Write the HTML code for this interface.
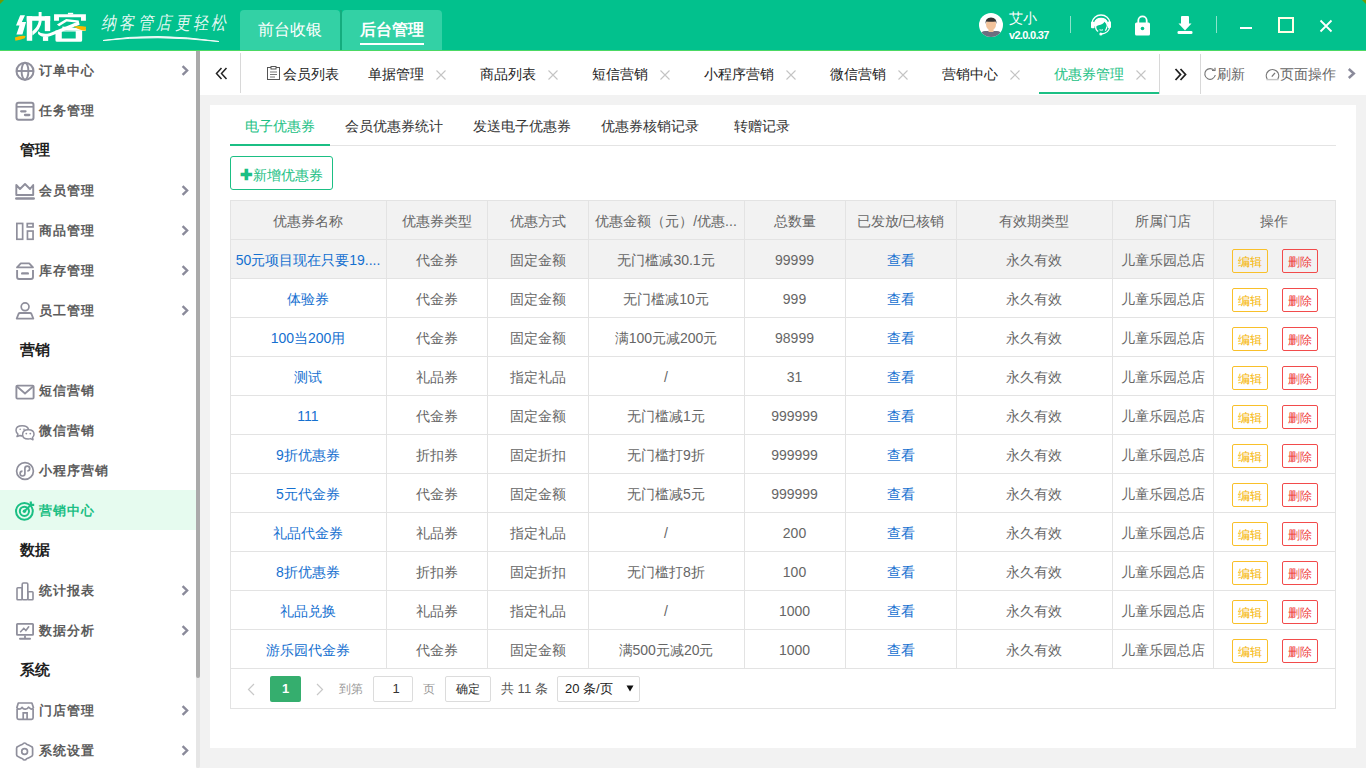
<!DOCTYPE html>
<html><head><meta charset="utf-8"><style>
*{box-sizing:border-box}
html,body{margin:0;padding:0}
body{width:1366px;height:768px;overflow:hidden;position:relative;font-family:"Liberation Sans",sans-serif;background:#f2f2f2;color:#333}
.ab{position:absolute;white-space:nowrap}
.hdr{left:0;top:0;width:1366px;height:50px;background:#02C18D}
.htab{top:10px;width:100px;height:40px;background:#33D1A5;border-radius:4px 4px 0 0;color:#fff;font-size:16px;line-height:40px;text-align:center}
.side{left:0;top:51px;width:196px;height:717px;background:#fff}
.mi{left:39px;font-size:13px;line-height:20px;font-weight:bold;color:#5c5c5c;letter-spacing:1px}
.sec{left:20px;font-size:15px;line-height:20px;font-weight:bold;color:#1f1f1f;font-family:"Liberation Serif",serif}
.chev{left:181px;width:8px;height:11px}
.ico{left:15px;width:20px;height:20px}
.tabt{top:64px;font-size:14px;line-height:20px;color:#222}
.tx{top:70px;width:10px;height:10px}
.cell{font-size:14px;line-height:20px;color:#666;text-align:center}
.lnk{color:#1570d0}
.btn{width:36px;height:24px;border:1px solid;border-radius:2px;font-size:12px;line-height:24px;text-align:center}
</style></head><body>

<div class="ab hdr"></div>
<svg class="ab" style="left:0;top:0" width="5" height="5"><path d="M0 0 H4 L0 4 Z" fill="#6E9A05"/></svg>
<svg class="ab" style="left:1361px;top:0" width="5" height="5"><path d="M5 0 H1 L5 4 Z" fill="#6E9A05"/></svg>
<div class="ab" style="left:0;top:50px;width:1366px;height:1px;background:#4CD964"></div>
<svg class="ab" style="left:12px;top:8px" width="80" height="38" viewBox="0 0 1366 649"><g fill="#fff">
<path d="M140 125 H222 L168 238 H240 L178 452 H75 L128 300 H68 Z"/>
<path d="M252 140 H345 V560 H252 Z"/>
<path d="M252 140 H652 V218 H252 Z"/>
<path d="M455 68 H505 V230 Q490 370 350 470 L345 400 Q440 320 455 230 Z"/>
<path d="M560 140 H652 V395 H560 Z"/>
<path d="M528 488 H618 V562 H528 Z"/>
<path d="M445 395 Q520 465 640 430 L1140 228 L1155 285 L660 480 Q520 525 445 445 Z"/>
<path d="M718 105 H1262 V218 H1178 V158 H802 V218 H718 Z"/>
<path d="M955 82 H1045 V110 H955 Z"/>
<path d="M768 282 L925 190 L1140 212 L1140 250 L935 232 L805 310 Z"/>
<path d="M860 315 L1255 360 L1255 392 L860 382 Z"/>
<path d="M742 385 H1198 V552 Q1198 578 1170 578 H770 Q742 578 742 552 Z M850 402 V520 H1088 V402 Z" fill-rule="evenodd"/>
</g>
<path d="M50 505 Q140 465 232 478 L218 518 Q140 548 58 560 Z" fill="#F7B800"/>
<path d="M1050 318 Q1150 295 1265 322 L1258 390 Q1160 388 1050 318 Z" fill="#F7B800"/>
</svg>
<div class="ab" style="left:101px;top:11px;font-size:15px;line-height:20px;color:rgba(255,255,255,0.9);letter-spacing:3.4px;font-style:italic;transform:scaleY(1.2);transform-origin:0 0">纳客管店更轻松</div>
<svg class="ab" style="left:100px;top:32px" width="125" height="12" viewBox="0 0 125 12"><path d="M3 8.5 Q55 0 119 9.5 Q55 2.5 3 8.5 Z" stroke="#fff" stroke-width="1" fill="#fff" opacity="0.95"/></svg>
<div class="ab htab" style="left:240px">前台收银</div>
<div class="ab" style="left:340px;top:10px;width:2px;height:40px;background:#14AC7E"></div>
<div class="ab htab" style="left:342px;font-weight:bold">后台管理</div>
<div class="ab" style="left:360px;top:43px;width:64px;height:2px;background:#fff"></div>
<svg class="ab" style="left:979px;top:13px" width="24" height="24" viewBox="0 0 24 24">
<circle cx="12" cy="12" r="12" fill="#fff"/>
<clipPath id="cc"><circle cx="12" cy="12" r="12"/></clipPath>
<g clip-path="url(#cc)"><rect x="2" y="18" width="20" height="8" rx="4" fill="#6E6E80"/>
<rect x="9.5" y="14" width="5" height="5" fill="#F2C39B"/>
<ellipse cx="12" cy="11.5" rx="5" ry="5.5" fill="#F2C39B"/>
<path d="M6.5 11 Q6 4.5 12 4.5 Q18 4.5 17.5 11 L16.5 8.5 Q12 9 7.5 8.5 Z" fill="#333"/></g></svg>
<div class="ab" style="left:1009px;top:8px;font-size:14px;line-height:20px;color:#fff">艾小</div>
<div class="ab" style="left:1009px;top:28px;font-size:11px;line-height:14px;color:#fff;font-weight:bold;letter-spacing:-0.7px">v2.0.0.37</div>
<div class="ab" style="left:1070px;top:16px;width:1px;height:17px;background:rgba(255,255,255,0.55)"></div>
<svg class="ab" style="left:1086px;top:10px" width="30" height="30" viewBox="0 0 30 30">
<path d="M5.8 13 A9.3 9.3 0 0 1 24.2 13" stroke="#fff" stroke-width="1.4" fill="none"/>
<path d="M8.5 13.5 A6.7 6.7 0 0 1 21.5 13.5" stroke="#fff" stroke-width="1.1" fill="none"/>
<rect x="5" y="11.8" width="3.6" height="6.4" rx="1" fill="#fff"/>
<rect x="21.6" y="11.5" width="3.4" height="6.6" rx="1" fill="#fff"/>
<path d="M7.8 15.5 Q8 8.2 15 8.2 Q22 8.2 22.2 15.5 L21 17 Q20.5 13 18.5 11.8 Q17 14.8 12.5 15.2 Q10.2 15.6 9.8 17.5 Z" fill="#fff"/>
<path d="M9.6 16.5 Q9.8 20.5 12.2 21.3" stroke="#fff" stroke-width="1.3" fill="none"/>
<path d="M13.5 19.8 Q15.2 20.6 17 19.8" stroke="#fff" stroke-width="1" fill="none"/>
<path d="M19.3 20.6 Q20.6 19 20.9 16.5" stroke="#fff" stroke-width="1.3" fill="none"/>
<path d="M23.6 17.5 Q22.5 23.2 15.5 24" stroke="#fff" stroke-width="1.3" fill="none"/>
<circle cx="14.8" cy="24" r="1.5" fill="#fff"/></svg>
<svg class="ab" style="left:1134px;top:15px" width="17" height="21" viewBox="0 0 17 21">
<path d="M4.3 8 V5.5 A4.2 4.2 0 0 1 12.7 5.5 V8" stroke="#fff" stroke-width="1.8" fill="none"/>
<rect x="1" y="7.5" width="15" height="13" rx="1.5" fill="#fff"/>
<circle cx="8.5" cy="13.5" r="1.8" fill="#02C18D"/></svg>
<svg class="ab" style="left:1177px;top:15px" width="17" height="20" viewBox="0 0 17 20">
<rect x="4" y="1" width="8" height="8.5" rx="1" fill="#fff"/>
<path d="M1.5 8.5 H14.5 L8 15.5 Z" fill="#fff"/>
<rect x="0.5" y="16" width="15" height="3" rx="1.3" fill="#fff"/></svg>
<div class="ab" style="left:1216px;top:16px;width:1px;height:17px;background:rgba(255,255,255,0.55)"></div>
<div class="ab" style="left:1240px;top:27px;width:12px;height:2px;background:#fff"></div>
<div class="ab" style="left:1278px;top:17px;width:16px;height:16px;border:2px solid #FFFFE6"></div>
<svg class="ab" style="left:1319px;top:19px" width="14" height="14" viewBox="0 0 14 14"><path d="M1.5 1.5 L12.5 12.5 M12.5 1.5 L1.5 12.5" stroke="#fff" stroke-width="1.8"/></svg>
<div class="ab side"></div>
<div class="ab" style="left:196px;top:51px;width:4px;height:717px;background:#e6e6e6;border-radius:2px"></div>
<div class="ab" style="left:196px;top:51px;width:4px;height:627px;background:#aaaaaa;border-radius:0 0 2px 2px"></div>
<div class="ab" style="left:0;top:490px;width:196px;height:40px;background:#E6FBEF"></div>
<div class="ab mi" style="top:61px;color:#5c5c5c">订单中心</div>
<svg class="ab ico" style="top:61px" viewBox="0 0 20 20"><circle cx="10" cy="10.2" r="8.5" stroke="#8f8f9c" stroke-width="2" fill="none"/><ellipse cx="10" cy="10.2" rx="3.4" ry="8.5" stroke="#8f8f9c" stroke-width="1.9" fill="none"/><path d="M2 10 H18" stroke="#8f8f9c" stroke-width="1.9"/></svg>
<svg class="ab chev" style="top:65px" viewBox="0 0 8 11"><path d="M1.6 1.1 L6.1 5.5 L1.6 9.9" stroke="#8a8a9a" stroke-width="2.4" fill="none"/></svg>
<div class="ab mi" style="top:101px;color:#5c5c5c">任务管理</div>
<svg class="ab ico" style="top:101px" viewBox="0 0 20 20"><rect x="1.5" y="1.8" width="17" height="17" rx="2" stroke="#8f8f9c" stroke-width="2" fill="none"/><path d="M2 5.8 H18" stroke="#8f8f9c" stroke-width="1.7"/><path d="M6.2 10.3 H10.5 M10 14 H14.3" stroke="#8f8f9c" stroke-width="2.3" stroke-linecap="round"/></svg>
<div class="ab sec" style="top:140px">管理</div>
<div class="ab mi" style="top:181px;color:#5c5c5c">会员管理</div>
<svg class="ab ico" style="top:181px" viewBox="0 0 20 20"><path d="M1.3 14 V4 L5 8 L10 3 L15 8 L18.2 4 V14 Z" stroke="#8f8f9c" stroke-width="1.9" fill="none" stroke-linejoin="round"/><path d="M1.3 17.4 H18.7" stroke="#8f8f9c" stroke-width="2.5" stroke-linecap="round"/></svg>
<svg class="ab chev" style="top:185px" viewBox="0 0 8 11"><path d="M1.6 1.1 L6.1 5.5 L1.6 9.9" stroke="#8a8a9a" stroke-width="2.4" fill="none"/></svg>
<div class="ab mi" style="top:221px;color:#5c5c5c">商品管理</div>
<svg class="ab ico" style="top:221px" viewBox="0 0 20 20"><rect x="1.85" y="2.45" width="5.8" height="15.8" stroke="#8f8f9c" stroke-width="1.7" fill="none"/><rect x="12.25" y="2.55" width="5.8" height="3.4" stroke="#8f8f9c" stroke-width="1.7" fill="none"/><rect x="12.45" y="10.05" width="5.6" height="8.2" stroke="#8f8f9c" stroke-width="1.7" fill="none"/></svg>
<svg class="ab chev" style="top:225px" viewBox="0 0 8 11"><path d="M1.6 1.1 L6.1 5.5 L1.6 9.9" stroke="#8a8a9a" stroke-width="2.4" fill="none"/></svg>
<div class="ab mi" style="top:261px;color:#5c5c5c">库存管理</div>
<svg class="ab ico" style="top:261px" viewBox="0 0 20 20"><path d="M5.8 2.3 H14.2 L18 6.4 H2 Z" stroke="#8f8f9c" stroke-width="1.8" fill="none" stroke-linejoin="round"/><path d="M2.1 9 V16 Q2.1 18 4.1 18 H16 Q18 18 18 16 V9" stroke="#8f8f9c" stroke-width="1.9" fill="none"/><path d="M7.2 12.4 H12.8" stroke="#8f8f9c" stroke-width="2.4" stroke-linecap="round"/></svg>
<svg class="ab chev" style="top:265px" viewBox="0 0 8 11"><path d="M1.6 1.1 L6.1 5.5 L1.6 9.9" stroke="#8a8a9a" stroke-width="2.4" fill="none"/></svg>
<div class="ab mi" style="top:301px;color:#5c5c5c">员工管理</div>
<svg class="ab ico" style="top:301px" viewBox="0 0 20 20"><circle cx="10.1" cy="5.8" r="3.9" stroke="#8f8f9c" stroke-width="1.7" fill="none"/><path d="M5 12 H15 Q16 12 16.5 13 L18.3 17.6 H1.7 L3.5 13 Q4 12 5 12 Z" stroke="#8f8f9c" stroke-width="1.8" fill="none" stroke-linejoin="round"/></svg>
<svg class="ab chev" style="top:305px" viewBox="0 0 8 11"><path d="M1.6 1.1 L6.1 5.5 L1.6 9.9" stroke="#8a8a9a" stroke-width="2.4" fill="none"/></svg>
<div class="ab sec" style="top:340px">营销</div>
<div class="ab mi" style="top:381px;color:#5c5c5c">短信营销</div>
<svg class="ab ico" style="top:381px" viewBox="0 0 20 20"><rect x="1.4" y="4.6" width="17.2" height="13" rx="1" stroke="#8f8f9c" stroke-width="1.9" fill="none"/><path d="M2 5.5 L10 12.5 L18 5.5" stroke="#8f8f9c" stroke-width="1.8" fill="none"/></svg>
<div class="ab mi" style="top:421px;color:#5c5c5c">微信营销</div>
<svg class="ab ico" style="top:421px" viewBox="0 0 20 20"><path d="M7.5 15 Q6.2 15 5 14.5 L2 15.5 L3 13 Q1 11.5 1 9.3 Q1 4.8 7.3 4.8 Q12.5 4.8 13.5 8.3" stroke="#8f8f9c" stroke-width="1.5" fill="none" stroke-linejoin="round"/><path d="M13.3 8.8 Q19 8.8 19 13.3 Q19 15.3 17.5 16.5 L18 18.7 L15.5 17.6 Q14.4 18 13.3 18 Q7.6 18 7.6 13.4 Q7.6 8.8 13.3 8.8 Z" stroke="#8f8f9c" stroke-width="1.5" fill="#fff" stroke-linejoin="round"/><circle cx="11.3" cy="12.6" r="0.9" fill="#8f8f9c"/><circle cx="15.3" cy="12.6" r="0.9" fill="#8f8f9c"/><circle cx="5.2" cy="8.3" r="0.8" fill="#8f8f9c"/><circle cx="9" cy="8.3" r="0.8" fill="#8f8f9c"/></svg>
<div class="ab mi" style="top:461px;color:#5c5c5c">小程序营销</div>
<svg class="ab ico" style="top:461px" viewBox="0 0 20 20"><circle cx="10" cy="10" r="8.4" stroke="#8f8f9c" stroke-width="1.7" fill="none"/><path d="M7.5 10.2 A2.4 2.4 0 1 0 9.9 12.6 V7.6 A2.4 2.4 0 1 1 12.3 10" stroke="#8f8f9c" stroke-width="1.7" fill="none"/></svg>
<div class="ab mi" style="top:501px;color:#1BBF84">营销中心</div>
<svg class="ab ico" style="top:501px" viewBox="0 0 20 20"><circle cx="9.4" cy="10.3" r="8.4" stroke="#1BBF84" stroke-width="2" fill="none"/><circle cx="9.4" cy="10.3" r="4.6" stroke="#1BBF84" stroke-width="2" fill="none"/><circle cx="9.4" cy="10.3" r="1.7" fill="#1BBF84"/><path d="M9.4 10.3 L16.6 3.1" stroke="#1BBF84" stroke-width="2"/><path d="M15.8 0.6 V3.9 H19.2" stroke="#1BBF84" stroke-width="2.2" fill="none"/></svg>
<div class="ab sec" style="top:540px">数据</div>
<div class="ab mi" style="top:581px;color:#5c5c5c">统计报表</div>
<svg class="ab ico" style="top:581px" viewBox="0 0 20 20"><rect x="2" y="6.7" width="5.2" height="12" rx="0.8" stroke="#8f8f9c" stroke-width="1.6" fill="none"/><rect x="7.2" y="2" width="5.6" height="16.7" rx="1.2" stroke="#8f8f9c" stroke-width="1.6" fill="none"/><rect x="12.8" y="10.8" width="5.2" height="7.9" rx="0.8" stroke="#8f8f9c" stroke-width="1.6" fill="none"/></svg>
<svg class="ab chev" style="top:585px" viewBox="0 0 8 11"><path d="M1.6 1.1 L6.1 5.5 L1.6 9.9" stroke="#8a8a9a" stroke-width="2.4" fill="none"/></svg>
<div class="ab mi" style="top:621px;color:#5c5c5c">数据分析</div>
<svg class="ab ico" style="top:621px" viewBox="0 0 20 20"><rect x="1.9" y="2.8" width="16.2" height="11" rx="0.6" stroke="#8f8f9c" stroke-width="1.8" fill="none"/><path d="M10 14.5 V17.3" stroke="#8f8f9c" stroke-width="1.8"/><path d="M5 17.7 H15" stroke="#8f8f9c" stroke-width="2" stroke-linecap="round"/><path d="M5.6 10.7 L8.8 7.3 L10.9 9.5 L13.7 5.8" stroke="#8f8f9c" stroke-width="1.6" fill="none" stroke-linecap="round"/></svg>
<svg class="ab chev" style="top:625px" viewBox="0 0 8 11"><path d="M1.6 1.1 L6.1 5.5 L1.6 9.9" stroke="#8a8a9a" stroke-width="2.4" fill="none"/></svg>
<div class="ab sec" style="top:660px">系统</div>
<div class="ab mi" style="top:701px;color:#5c5c5c">门店管理</div>
<svg class="ab ico" style="top:701px" viewBox="0 0 20 20"><path d="M2.1 8 V16.8 Q2.1 18.3 3.6 18.3 H16.6 Q18.1 18.3 18.1 16.8 V8" stroke="#8f8f9c" stroke-width="1.7" fill="none"/><path d="M3.3 2 H16.9 L18.4 6.6 Q17.6 8.3 16 8 Q14.7 7.2 13.5 6.2 Q12.4 8.4 10.1 8.2 Q8.2 8.3 7.2 6.3 Q5.8 8.2 4 8.2 Q2.4 8 1.9 6.6 Z" stroke="#8f8f9c" stroke-width="1.7" fill="none" stroke-linejoin="round"/><path d="M8.2 18.3 V11.8 H12.1 V18.3" stroke="#8f8f9c" stroke-width="1.7" fill="none"/></svg>
<svg class="ab chev" style="top:705px" viewBox="0 0 8 11"><path d="M1.6 1.1 L6.1 5.5 L1.6 9.9" stroke="#8a8a9a" stroke-width="2.4" fill="none"/></svg>
<div class="ab mi" style="top:741px;color:#5c5c5c">系统设置</div>
<svg class="ab ico" style="top:741px" viewBox="0 0 20 20"><path d="M9.6 2 Q11 2 11.5 3.3 Q14 4 16.4 5.6 Q17.6 5.9 17.6 7.2 V13.8 Q17.6 15.1 16.4 15.4 Q14 17 11.5 17.7 Q11 19 9.6 19 Q8.2 19 7.7 17.7 Q5.2 17 2.8 15.4 Q1.6 15.1 1.6 13.8 V7.2 Q1.6 5.9 2.8 5.6 Q5.2 4 7.7 3.3 Q8.2 2 9.6 2 Z" stroke="#8f8f9c" stroke-width="1.7" fill="none" stroke-linejoin="round"/><circle cx="9.6" cy="10.5" r="2.9" stroke="#8f8f9c" stroke-width="1.7" fill="none"/></svg>
<svg class="ab chev" style="top:745px" viewBox="0 0 8 11"><path d="M1.6 1.1 L6.1 5.5 L1.6 9.9" stroke="#8a8a9a" stroke-width="2.4" fill="none"/></svg>
<div class="ab" style="left:200px;top:51px;width:1166px;height:44px;background:#fff"></div>
<svg class="ab" style="left:215px;top:67px" width="13" height="13" viewBox="0 0 13 13"><path d="M6.5 1 L1.5 6.5 L6.5 12 M11.5 1 L6.5 6.5 L11.5 12" stroke="#222" stroke-width="1.5" fill="none"/></svg>
<div class="ab" style="left:240px;top:53px;width:1px;height:40px;background:#d8d8d8"></div>
<svg class="ab" style="left:267px;top:66px" width="13" height="14" viewBox="0 0 13 14"><rect x="0.5" y="1.5" width="12" height="12" stroke="#555" stroke-width="1" fill="none"/><rect x="4" y="0.5" width="5" height="2.5" fill="#fff" stroke="#555" stroke-width="1"/><path d="M3 6 H10 M3 8.5 H10 M3 11 H8" stroke="#777" stroke-width="1"/></svg>
<div class="ab tabt" style="left:283px;color:#222">会员列表</div>
<div class="ab tabt" style="left:368px;color:#222">单据管理</div>
<svg class="ab tx" style="left:436px" viewBox="0 0 10 10"><path d="M0.5 0.5 L9.5 9.5 M9.5 0.5 L0.5 9.5" stroke="#c4c4c4" stroke-width="1.1"/></svg>
<div class="ab tabt" style="left:480px;color:#222">商品列表</div>
<svg class="ab tx" style="left:548px" viewBox="0 0 10 10"><path d="M0.5 0.5 L9.5 9.5 M9.5 0.5 L0.5 9.5" stroke="#c4c4c4" stroke-width="1.1"/></svg>
<div class="ab tabt" style="left:592px;color:#222">短信营销</div>
<svg class="ab tx" style="left:660px" viewBox="0 0 10 10"><path d="M0.5 0.5 L9.5 9.5 M9.5 0.5 L0.5 9.5" stroke="#c4c4c4" stroke-width="1.1"/></svg>
<div class="ab tabt" style="left:704px;color:#222">小程序营销</div>
<svg class="ab tx" style="left:786px" viewBox="0 0 10 10"><path d="M0.5 0.5 L9.5 9.5 M9.5 0.5 L0.5 9.5" stroke="#c4c4c4" stroke-width="1.1"/></svg>
<div class="ab tabt" style="left:830px;color:#222">微信营销</div>
<svg class="ab tx" style="left:898px" viewBox="0 0 10 10"><path d="M0.5 0.5 L9.5 9.5 M9.5 0.5 L0.5 9.5" stroke="#c4c4c4" stroke-width="1.1"/></svg>
<div class="ab tabt" style="left:942px;color:#222">营销中心</div>
<svg class="ab tx" style="left:1010px" viewBox="0 0 10 10"><path d="M0.5 0.5 L9.5 9.5 M9.5 0.5 L0.5 9.5" stroke="#c4c4c4" stroke-width="1.1"/></svg>
<div class="ab tabt" style="left:1054px;color:#1BBF84">优惠券管理</div>
<svg class="ab tx" style="left:1136px" viewBox="0 0 10 10"><path d="M0.5 0.5 L9.5 9.5 M9.5 0.5 L0.5 9.5" stroke="#c4c4c4" stroke-width="1.1"/></svg>
<div class="ab" style="left:1039px;top:92px;width:120px;height:2px;background:#1BBF84"></div>
<div class="ab" style="left:1159px;top:54px;width:1px;height:40px;background:#d8d8d8"></div>
<svg class="ab" style="left:1174px;top:68px" width="13" height="13" viewBox="0 0 13 13"><path d="M1.5 1 L6.5 6.5 L1.5 12 M6.5 1 L11.5 6.5 L6.5 12" stroke="#222" stroke-width="1.8" fill="none"/></svg>
<div class="ab" style="left:1200px;top:54px;width:1px;height:40px;background:#d8d8d8"></div>
<svg class="ab" style="left:1203px;top:67px" width="14" height="14" viewBox="0 0 14 14"><path d="M11.5 4 A5.3 5.3 0 1 0 12.3 8" stroke="#777" stroke-width="1.2" fill="none"/><path d="M9 3.5 H12 V0.8" stroke="#777" stroke-width="1.2" fill="none"/></svg>
<div class="ab" style="left:1217px;top:64px;font-size:14px;line-height:20px;color:#666">刷新</div>
<svg class="ab" style="left:1265px;top:67px" width="15" height="14" viewBox="0 0 15 14"><path d="M2.2 12 A6.2 6.2 0 1 1 12.8 12" stroke="#777" stroke-width="1.2" fill="none"/><path d="M1.5 12.6 H13.5" stroke="#c4c4c4" stroke-width="1.4"/><path d="M6.8 9.6 L10 5.8" stroke="#777" stroke-width="1.3"/></svg>
<div class="ab" style="left:1280px;top:64px;font-size:14px;line-height:20px;color:#666">页面操作</div>
<svg class="ab" style="left:1347px;top:68px" width="9" height="11" viewBox="0 0 9 11"><path d="M1.8 1 L6.8 5.5 L1.8 10" stroke="#8a8a9a" stroke-width="2.5" fill="none"/></svg>
<div class="ab" style="left:210px;top:105px;width:1146px;height:643px;background:#fff"></div>
<div class="ab" style="left:230px;top:145px;width:1106px;height:1px;background:#e4e4e4"></div>
<div class="ab" style="left:230px;top:116px;width:100px;text-align:center;font-size:14px;line-height:20px;color:#1BBF84">电子优惠券</div>
<div class="ab" style="left:330px;top:116px;width:128px;text-align:center;font-size:14px;line-height:20px;color:#333">会员优惠券统计</div>
<div class="ab" style="left:458px;top:116px;width:128px;text-align:center;font-size:14px;line-height:20px;color:#333">发送电子优惠券</div>
<div class="ab" style="left:586px;top:116px;width:128px;text-align:center;font-size:14px;line-height:20px;color:#333">优惠券核销记录</div>
<div class="ab" style="left:716px;top:116px;width:92px;text-align:center;font-size:14px;line-height:20px;color:#333">转赠记录</div>
<div class="ab" style="left:230px;top:144px;width:100px;height:2px;background:#1BBF84"></div>
<div class="ab" style="left:230px;top:156px;width:103px;height:34px;border:1px solid #1BBF84;border-radius:3px"></div>
<div class="ab" style="left:240px;top:165px;font-size:14px;line-height:20px;color:#1BBF84"><b style="font-size:15px">&#10010;</b>新增优惠券</div>
<div class="ab" style="left:230px;top:200px;width:1105px;height:39px;background:#f2f2f2"></div>
<div class="ab" style="left:230px;top:239px;width:1105px;height:39px;background:#f2f2f2"></div>
<div class="ab" style="left:230px;top:200px;width:1106px;height:1px;background:#e3e3e3"></div>
<div class="ab" style="left:230px;top:239px;width:1106px;height:1px;background:#e3e3e3"></div>
<div class="ab" style="left:230px;top:278px;width:1106px;height:1px;background:#e3e3e3"></div>
<div class="ab" style="left:230px;top:317px;width:1106px;height:1px;background:#e3e3e3"></div>
<div class="ab" style="left:230px;top:356px;width:1106px;height:1px;background:#e3e3e3"></div>
<div class="ab" style="left:230px;top:395px;width:1106px;height:1px;background:#e3e3e3"></div>
<div class="ab" style="left:230px;top:434px;width:1106px;height:1px;background:#e3e3e3"></div>
<div class="ab" style="left:230px;top:473px;width:1106px;height:1px;background:#e3e3e3"></div>
<div class="ab" style="left:230px;top:512px;width:1106px;height:1px;background:#e3e3e3"></div>
<div class="ab" style="left:230px;top:551px;width:1106px;height:1px;background:#e3e3e3"></div>
<div class="ab" style="left:230px;top:590px;width:1106px;height:1px;background:#e3e3e3"></div>
<div class="ab" style="left:230px;top:629px;width:1106px;height:1px;background:#e3e3e3"></div>
<div class="ab" style="left:230px;top:668px;width:1106px;height:1px;background:#e3e3e3"></div>
<div class="ab" style="left:230px;top:200px;width:1px;height:468px;background:#e3e3e3"></div>
<div class="ab" style="left:386px;top:200px;width:1px;height:468px;background:#e3e3e3"></div>
<div class="ab" style="left:487px;top:200px;width:1px;height:468px;background:#e3e3e3"></div>
<div class="ab" style="left:588px;top:200px;width:1px;height:468px;background:#e3e3e3"></div>
<div class="ab" style="left:744px;top:200px;width:1px;height:468px;background:#e3e3e3"></div>
<div class="ab" style="left:845px;top:200px;width:1px;height:468px;background:#e3e3e3"></div>
<div class="ab" style="left:956px;top:200px;width:1px;height:468px;background:#e3e3e3"></div>
<div class="ab" style="left:1112px;top:200px;width:1px;height:468px;background:#e3e3e3"></div>
<div class="ab" style="left:1213px;top:200px;width:1px;height:468px;background:#e3e3e3"></div>
<div class="ab" style="left:1335px;top:200px;width:1px;height:468px;background:#e3e3e3"></div>
<div class="ab" style="left:230px;top:668px;width:1px;height:40px;background:#e3e3e3"></div>
<div class="ab" style="left:1335px;top:668px;width:1px;height:40px;background:#e3e3e3"></div>
<div class="ab" style="left:230px;top:708px;width:1106px;height:1px;background:#e3e3e3"></div>
<div class="ab cell" style="left:230px;top:211px;width:156px">优惠券名称</div>
<div class="ab cell" style="left:386px;top:211px;width:101px">优惠券类型</div>
<div class="ab cell" style="left:487px;top:211px;width:101px">优惠方式</div>
<div class="ab cell" style="left:588px;top:211px;width:156px">优惠金额（元）/优惠...</div>
<div class="ab cell" style="left:744px;top:211px;width:101px">总数量</div>
<div class="ab cell" style="left:845px;top:211px;width:111px">已发放/已核销</div>
<div class="ab cell" style="left:956px;top:211px;width:156px">有效期类型</div>
<div class="ab cell" style="left:1112px;top:211px;width:101px">所属门店</div>
<div class="ab cell" style="left:1213px;top:211px;width:122px">操作</div>
<div class="ab cell lnk" style="left:230px;top:250px;width:156px">50元项目现在只要19....</div>
<div class="ab cell" style="left:386px;top:250px;width:101px">代金券</div>
<div class="ab cell" style="left:487px;top:250px;width:101px">固定金额</div>
<div class="ab cell" style="left:588px;top:250px;width:156px">无门槛减30.1元</div>
<div class="ab cell" style="left:744px;top:250px;width:101px">99999</div>
<div class="ab cell lnk" style="left:845px;top:250px;width:111px">查看</div>
<div class="ab cell" style="left:956px;top:250px;width:156px">永久有效</div>
<div class="ab cell" style="left:1112px;top:250px;width:101px">儿童乐园总店</div>
<div class="ab btn" style="left:1232px;top:249px;border-color:#F9C02A;color:#F5B400">编辑</div>
<div class="ab btn" style="left:1282px;top:249px;border-color:#F24B4B;color:#EE3B3B">删除</div>
<div class="ab cell lnk" style="left:230px;top:289px;width:156px">体验券</div>
<div class="ab cell" style="left:386px;top:289px;width:101px">代金券</div>
<div class="ab cell" style="left:487px;top:289px;width:101px">固定金额</div>
<div class="ab cell" style="left:588px;top:289px;width:156px">无门槛减10元</div>
<div class="ab cell" style="left:744px;top:289px;width:101px">999</div>
<div class="ab cell lnk" style="left:845px;top:289px;width:111px">查看</div>
<div class="ab cell" style="left:956px;top:289px;width:156px">永久有效</div>
<div class="ab cell" style="left:1112px;top:289px;width:101px">儿童乐园总店</div>
<div class="ab btn" style="left:1232px;top:288px;border-color:#F9C02A;color:#F5B400">编辑</div>
<div class="ab btn" style="left:1282px;top:288px;border-color:#F24B4B;color:#EE3B3B">删除</div>
<div class="ab cell lnk" style="left:230px;top:328px;width:156px">100当200用</div>
<div class="ab cell" style="left:386px;top:328px;width:101px">代金券</div>
<div class="ab cell" style="left:487px;top:328px;width:101px">固定金额</div>
<div class="ab cell" style="left:588px;top:328px;width:156px">满100元减200元</div>
<div class="ab cell" style="left:744px;top:328px;width:101px">98999</div>
<div class="ab cell lnk" style="left:845px;top:328px;width:111px">查看</div>
<div class="ab cell" style="left:956px;top:328px;width:156px">永久有效</div>
<div class="ab cell" style="left:1112px;top:328px;width:101px">儿童乐园总店</div>
<div class="ab btn" style="left:1232px;top:327px;border-color:#F9C02A;color:#F5B400">编辑</div>
<div class="ab btn" style="left:1282px;top:327px;border-color:#F24B4B;color:#EE3B3B">删除</div>
<div class="ab cell lnk" style="left:230px;top:367px;width:156px">测试</div>
<div class="ab cell" style="left:386px;top:367px;width:101px">礼品券</div>
<div class="ab cell" style="left:487px;top:367px;width:101px">指定礼品</div>
<div class="ab cell" style="left:588px;top:367px;width:156px">/</div>
<div class="ab cell" style="left:744px;top:367px;width:101px">31</div>
<div class="ab cell lnk" style="left:845px;top:367px;width:111px">查看</div>
<div class="ab cell" style="left:956px;top:367px;width:156px">永久有效</div>
<div class="ab cell" style="left:1112px;top:367px;width:101px">儿童乐园总店</div>
<div class="ab btn" style="left:1232px;top:366px;border-color:#F9C02A;color:#F5B400">编辑</div>
<div class="ab btn" style="left:1282px;top:366px;border-color:#F24B4B;color:#EE3B3B">删除</div>
<div class="ab cell lnk" style="left:230px;top:406px;width:156px">111</div>
<div class="ab cell" style="left:386px;top:406px;width:101px">代金券</div>
<div class="ab cell" style="left:487px;top:406px;width:101px">固定金额</div>
<div class="ab cell" style="left:588px;top:406px;width:156px">无门槛减1元</div>
<div class="ab cell" style="left:744px;top:406px;width:101px">999999</div>
<div class="ab cell lnk" style="left:845px;top:406px;width:111px">查看</div>
<div class="ab cell" style="left:956px;top:406px;width:156px">永久有效</div>
<div class="ab cell" style="left:1112px;top:406px;width:101px">儿童乐园总店</div>
<div class="ab btn" style="left:1232px;top:405px;border-color:#F9C02A;color:#F5B400">编辑</div>
<div class="ab btn" style="left:1282px;top:405px;border-color:#F24B4B;color:#EE3B3B">删除</div>
<div class="ab cell lnk" style="left:230px;top:445px;width:156px">9折优惠券</div>
<div class="ab cell" style="left:386px;top:445px;width:101px">折扣券</div>
<div class="ab cell" style="left:487px;top:445px;width:101px">固定折扣</div>
<div class="ab cell" style="left:588px;top:445px;width:156px">无门槛打9折</div>
<div class="ab cell" style="left:744px;top:445px;width:101px">999999</div>
<div class="ab cell lnk" style="left:845px;top:445px;width:111px">查看</div>
<div class="ab cell" style="left:956px;top:445px;width:156px">永久有效</div>
<div class="ab cell" style="left:1112px;top:445px;width:101px">儿童乐园总店</div>
<div class="ab btn" style="left:1232px;top:444px;border-color:#F9C02A;color:#F5B400">编辑</div>
<div class="ab btn" style="left:1282px;top:444px;border-color:#F24B4B;color:#EE3B3B">删除</div>
<div class="ab cell lnk" style="left:230px;top:484px;width:156px">5元代金券</div>
<div class="ab cell" style="left:386px;top:484px;width:101px">代金券</div>
<div class="ab cell" style="left:487px;top:484px;width:101px">固定金额</div>
<div class="ab cell" style="left:588px;top:484px;width:156px">无门槛减5元</div>
<div class="ab cell" style="left:744px;top:484px;width:101px">999999</div>
<div class="ab cell lnk" style="left:845px;top:484px;width:111px">查看</div>
<div class="ab cell" style="left:956px;top:484px;width:156px">永久有效</div>
<div class="ab cell" style="left:1112px;top:484px;width:101px">儿童乐园总店</div>
<div class="ab btn" style="left:1232px;top:483px;border-color:#F9C02A;color:#F5B400">编辑</div>
<div class="ab btn" style="left:1282px;top:483px;border-color:#F24B4B;color:#EE3B3B">删除</div>
<div class="ab cell lnk" style="left:230px;top:523px;width:156px">礼品代金券</div>
<div class="ab cell" style="left:386px;top:523px;width:101px">礼品券</div>
<div class="ab cell" style="left:487px;top:523px;width:101px">指定礼品</div>
<div class="ab cell" style="left:588px;top:523px;width:156px">/</div>
<div class="ab cell" style="left:744px;top:523px;width:101px">200</div>
<div class="ab cell lnk" style="left:845px;top:523px;width:111px">查看</div>
<div class="ab cell" style="left:956px;top:523px;width:156px">永久有效</div>
<div class="ab cell" style="left:1112px;top:523px;width:101px">儿童乐园总店</div>
<div class="ab btn" style="left:1232px;top:522px;border-color:#F9C02A;color:#F5B400">编辑</div>
<div class="ab btn" style="left:1282px;top:522px;border-color:#F24B4B;color:#EE3B3B">删除</div>
<div class="ab cell lnk" style="left:230px;top:562px;width:156px">8折优惠券</div>
<div class="ab cell" style="left:386px;top:562px;width:101px">折扣券</div>
<div class="ab cell" style="left:487px;top:562px;width:101px">固定折扣</div>
<div class="ab cell" style="left:588px;top:562px;width:156px">无门槛打8折</div>
<div class="ab cell" style="left:744px;top:562px;width:101px">100</div>
<div class="ab cell lnk" style="left:845px;top:562px;width:111px">查看</div>
<div class="ab cell" style="left:956px;top:562px;width:156px">永久有效</div>
<div class="ab cell" style="left:1112px;top:562px;width:101px">儿童乐园总店</div>
<div class="ab btn" style="left:1232px;top:561px;border-color:#F9C02A;color:#F5B400">编辑</div>
<div class="ab btn" style="left:1282px;top:561px;border-color:#F24B4B;color:#EE3B3B">删除</div>
<div class="ab cell lnk" style="left:230px;top:601px;width:156px">礼品兑换</div>
<div class="ab cell" style="left:386px;top:601px;width:101px">礼品券</div>
<div class="ab cell" style="left:487px;top:601px;width:101px">指定礼品</div>
<div class="ab cell" style="left:588px;top:601px;width:156px">/</div>
<div class="ab cell" style="left:744px;top:601px;width:101px">1000</div>
<div class="ab cell lnk" style="left:845px;top:601px;width:111px">查看</div>
<div class="ab cell" style="left:956px;top:601px;width:156px">永久有效</div>
<div class="ab cell" style="left:1112px;top:601px;width:101px">儿童乐园总店</div>
<div class="ab btn" style="left:1232px;top:600px;border-color:#F9C02A;color:#F5B400">编辑</div>
<div class="ab btn" style="left:1282px;top:600px;border-color:#F24B4B;color:#EE3B3B">删除</div>
<div class="ab cell lnk" style="left:230px;top:640px;width:156px">游乐园代金券</div>
<div class="ab cell" style="left:386px;top:640px;width:101px">代金券</div>
<div class="ab cell" style="left:487px;top:640px;width:101px">固定金额</div>
<div class="ab cell" style="left:588px;top:640px;width:156px">满500元减20元</div>
<div class="ab cell" style="left:744px;top:640px;width:101px">1000</div>
<div class="ab cell lnk" style="left:845px;top:640px;width:111px">查看</div>
<div class="ab cell" style="left:956px;top:640px;width:156px">永久有效</div>
<div class="ab cell" style="left:1112px;top:640px;width:101px">儿童乐园总店</div>
<div class="ab btn" style="left:1232px;top:639px;border-color:#F9C02A;color:#F5B400">编辑</div>
<div class="ab btn" style="left:1282px;top:639px;border-color:#F24B4B;color:#EE3B3B">删除</div>
<svg class="ab" style="left:246px;top:683px" width="10" height="13" viewBox="0 0 10 13"><path d="M8 1 L2.5 6.5 L8 12" stroke="#c8c8c8" stroke-width="1.2" fill="none"/></svg>
<div class="ab" style="left:270px;top:676px;width:31px;height:26px;background:#35AE6E;border-radius:2px;color:#fff;font-size:13px;line-height:26px;text-align:center;font-weight:bold">1</div>
<svg class="ab" style="left:315px;top:683px" width="10" height="13" viewBox="0 0 10 13"><path d="M2 1 L7.5 6.5 L2 12" stroke="#c8c8c8" stroke-width="1.2" fill="none"/></svg>
<div class="ab" style="left:339px;top:679px;font-size:12px;line-height:20px;color:#999">到第</div>
<div class="ab" style="left:373px;top:676px;width:40px;height:26px;border:1px solid #dcdcdc;border-radius:2px;font-size:13px;line-height:24px;text-align:center;color:#333;padding-left:6px">1</div>
<div class="ab" style="left:423px;top:679px;font-size:12px;line-height:20px;color:#999">页</div>
<div class="ab" style="left:445px;top:676px;width:46px;height:26px;border:1px solid #dcdcdc;border-radius:2px;font-size:12px;line-height:24px;text-align:center;color:#333">确定</div>
<div class="ab" style="left:501px;top:679px;font-size:13px;line-height:20px;color:#555">共 11 条</div>
<div class="ab" style="left:557px;top:676px;width:83px;height:26px;border:1px solid #dcdcdc;border-radius:2px;background:#fff"></div>
<div class="ab" style="left:565px;top:679px;font-size:13px;line-height:20px;color:#222">20 条/页</div>
<svg class="ab" style="left:626px;top:685px" width="8" height="7" viewBox="0 0 8 7"><path d="M0.5 0.5 H7.5 L4 6.5 Z" fill="#111"/></svg>
</body></html>
